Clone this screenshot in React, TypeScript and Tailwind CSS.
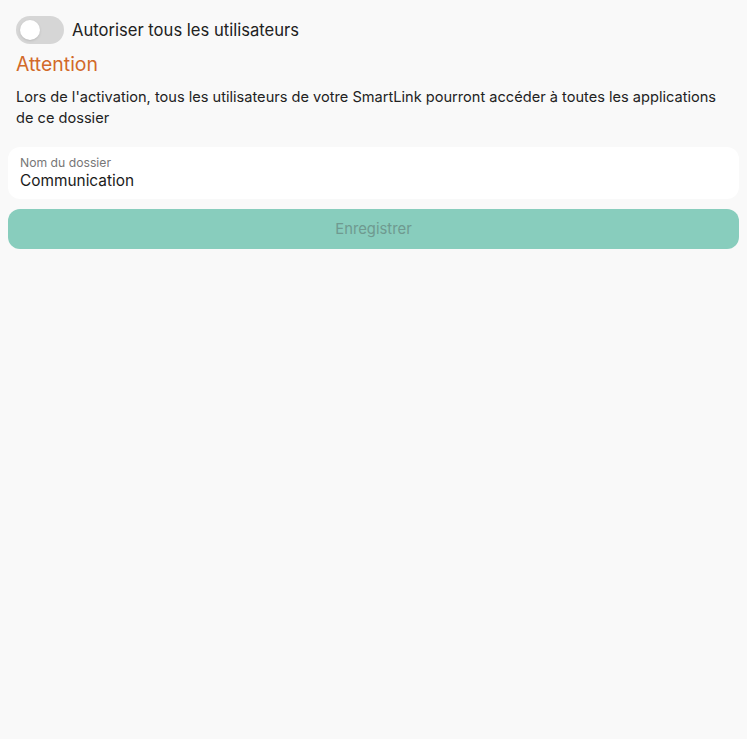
import React, { useState } from 'react';

export default function App() {
  const [allowAll, setAllowAll] = useState(false);
  const [name, setName] = useState('Communication');

  return (
    <div className="min-h-[739px] w-full bg-[#f9f9f9] text-[#1a1a1a]" style={{ fontFamily: 'Inter, "Open Sans", sans-serif' }}>
      <div className="flex flex-col px-2 pt-4">
        {/* Toggle */}
        <label className="flex items-center gap-2 px-2 cursor-pointer">
          <button
            type="button"
            onClick={() => setAllowAll(!allowAll)}
            className={`relative h-7 w-12 rounded-full transition-colors ${allowAll ? 'bg-[#88cdbd]' : 'bg-[#d6d6d6]'}`}
          >
            <span className={`absolute top-[4px] h-5 w-5 rounded-full bg-white shadow-sm transition-all ${allowAll ? 'left-[24px]' : 'left-[4px]'}`} />
          </button>
          <span className="text-[16.6px] leading-[24px] text-[#222]">Autoriser tous les utilisateurs</span>
        </label>

        {/* Warning */}
        <h3 className="mt-[8px] px-2 text-[19.4px] leading-[24px] text-[#d2692a]">Attention</h3>
        <p className="mt-[11px] pl-2 pr-1 text-[14.6px] leading-[21px] text-[#222]">
          Lors de l'activation, tous les utilisateurs de votre SmartLink pourront accéder à toutes les applications de ce dossier
        </p>

        {/* Field */}
        <div className="mt-[18px] flex h-[52px] flex-col justify-center rounded-xl bg-white px-3">
          <span className="text-[12.2px] leading-[14px] text-[#777]">Nom du dossier</span>
          <input
            value={name}
            onChange={(e) => setName(e.target.value)}
            className="mt-[1px] bg-transparent text-[15.4px] leading-[20px] text-[#1a1a1a] outline-none"
          />
        </div>

        {/* Submit */}
        <button
          type="button"
          disabled
          className="mt-[10px] h-[40px] w-full rounded-xl bg-[#88cdbd] text-[14.8px] text-[#6f9a90]"
        >
          Enregistrer
        </button>
      </div>
    </div>
  );
}
